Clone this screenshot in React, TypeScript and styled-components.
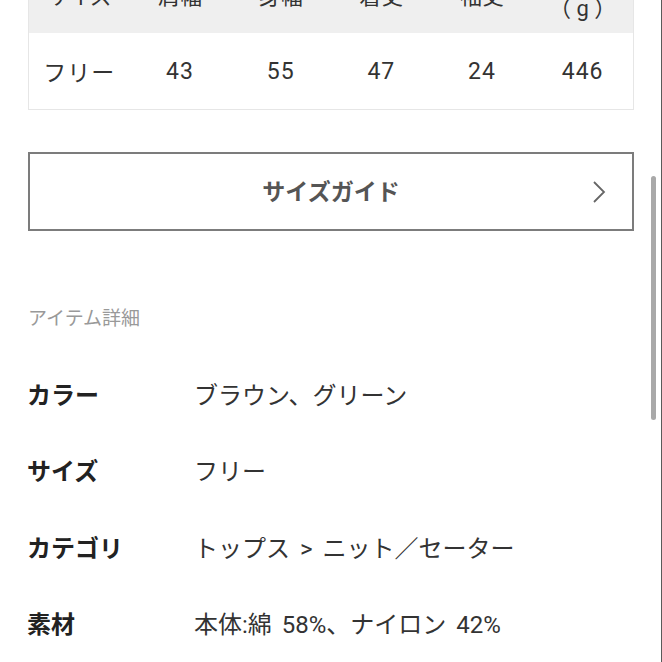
import React from "react";
import styled, { createGlobalStyle } from "styled-components";

const Global = createGlobalStyle`
  html, body { margin: 0; padding: 0; background: #fff; }
  body { overflow: hidden; font-family: Roboto, "Noto Sans CJK JP", sans-serif; }
`;

const Frame = styled.div`
  position: relative;
  width: 662px;
  height: 662px;
  box-sizing: border-box;
  border-right: 1px solid #5a5a5a;
  overflow: hidden;
  background: #fff;
`;

const Content = styled.div`
  width: 606px;
  margin-left: 28px;
  margin-top: -40px;
  display: flex;
  flex-direction: column;
`;

const Table = styled.div`
  display: grid;
  grid-template-columns: repeat(6, 1fr);
  border: 1px solid #e6e6e6;
  border-top: none;
`;

const HeadCell = styled.div`
  height: 73px;
  background: #efefef;
  display: flex;
  align-items: center;
  justify-content: center;
  text-align: center;
  font-size: 22px;
  line-height: 24px;
  color: #333;
  white-space: pre-line;
`;

const DataCell = styled.div`
  height: 76px;
  display: flex;
  align-items: center;
  justify-content: center;
  font-size: 23px;
  letter-spacing: 1px;
  color: #333;
`;

const GuideButton = styled.div`
  margin-top: 42px;
  height: 79px;
  box-sizing: border-box;
  border: 2px solid #7c7c7c;
  padding-bottom: 4px;
  display: flex;
  align-items: center;
  justify-content: center;
  position: relative;
  font-size: 23px;
  font-weight: 700;
  color: #555;
`;

const Chevron = styled.svg`
  position: absolute;
  right: 26px;
  top: 50%;
  transform: translateY(-50%);
`;

const SectionTitle = styled.div`
  margin-top: 47px;
  height: 77px;
  display: flex;
  align-items: center;
  font-size: 19px;
  color: #999;
`;

const Row = styled.div`
  height: 76.5px;
  display: grid;
  grid-template-columns: 166px 1fr;
  align-items: center;
  font-size: 24px;
`;

const Label = styled.div`
  font-weight: 700;
  color: #222;
  margin-left: -1px;
`;

const Value = styled.div`
  color: #333;
  word-spacing: 4px;
`;

const ScrollThumb = styled.div`
  position: absolute;
  left: 651px;
  top: 176px;
  width: 5px;
  height: 244px;
  border-radius: 3px;
  background: #a9a9a9;
`;

const heads = ["サイズ", "肩幅", "身幅", "着丈", "袖丈", "重さ\n（ g ）"];
const data = ["フリー", "43", "55", "47", "24", "446"];
const details: [string, string][] = [
  ["カラー", "ブラウン、グリーン"],
  ["サイズ", "フリー"],
  ["カテゴリ", "トップス > ニット／セーター"],
  ["素材", "本体:綿 58%、ナイロン 42%"],
];

export default function App() {
  return (
    <Frame>
      <Global />
      <Content>
        <Table>
          {heads.map((h) => (
            <HeadCell key={h}>{h}</HeadCell>
          ))}
          {data.map((d, i) => (
            <DataCell key={i}>{d}</DataCell>
          ))}
        </Table>
        <GuideButton>
          サイズガイド
          <Chevron width="14" height="24" viewBox="0 0 14 24">
            <path d="M2 2 L12 12 L2 22" fill="none" stroke="#666" strokeWidth="1.8" />
          </Chevron>
        </GuideButton>
        <SectionTitle>アイテム詳細</SectionTitle>
        {details.map(([l, v]) => (
          <Row key={l}>
            <Label>{l}</Label>
            <Value>{v}</Value>
          </Row>
        ))}
      </Content>
      <ScrollThumb />
    </Frame>
  );
}
